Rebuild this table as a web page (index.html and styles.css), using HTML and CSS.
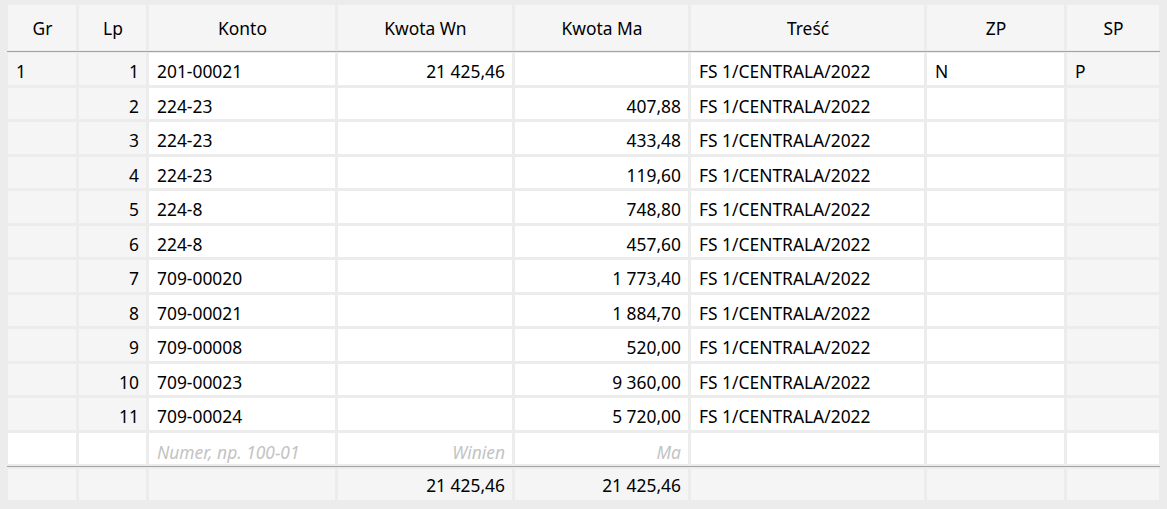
FILE: index.html
```html
<!DOCTYPE html>
<html lang="pl">
<head>
<meta charset="utf-8">
<link rel="stylesheet" href="styles.css">
</head>
<body>
<div class="table">
  <div class="row head">
    <div class="c">Gr</div><div class="c">Lp</div><div class="c">Konto</div><div class="c">Kwota Wn</div><div class="c">Kwota Ma</div><div class="c">Treść</div><div class="c">ZP</div><div class="c">SP</div>
  </div>
  <div class="rule"></div>
  <div class="body">
    <div class="row data"><div class="c ro">1</div><div class="c ro r">1</div><div class="c">201-00021</div><div class="c r">21 425,46</div><div class="c r"></div><div class="c">FS 1/CENTRALA/2022</div><div class="c">N</div><div class="c ro">P</div></div>
    <div class="row data"><div class="c ro"></div><div class="c ro r">2</div><div class="c">224-23</div><div class="c r"></div><div class="c r">407,88</div><div class="c">FS 1/CENTRALA/2022</div><div class="c"></div><div class="c ro"></div></div>
    <div class="row data"><div class="c ro"></div><div class="c ro r">3</div><div class="c">224-23</div><div class="c r"></div><div class="c r">433,48</div><div class="c">FS 1/CENTRALA/2022</div><div class="c"></div><div class="c ro"></div></div>
    <div class="row data"><div class="c ro"></div><div class="c ro r">4</div><div class="c">224-23</div><div class="c r"></div><div class="c r">119,60</div><div class="c">FS 1/CENTRALA/2022</div><div class="c"></div><div class="c ro"></div></div>
    <div class="row data"><div class="c ro"></div><div class="c ro r">5</div><div class="c">224-8</div><div class="c r"></div><div class="c r">748,80</div><div class="c">FS 1/CENTRALA/2022</div><div class="c"></div><div class="c ro"></div></div>
    <div class="row data"><div class="c ro"></div><div class="c ro r">6</div><div class="c">224-8</div><div class="c r"></div><div class="c r">457,60</div><div class="c">FS 1/CENTRALA/2022</div><div class="c"></div><div class="c ro"></div></div>
    <div class="row data"><div class="c ro"></div><div class="c ro r">7</div><div class="c">709-00020</div><div class="c r"></div><div class="c r">1 773,40</div><div class="c">FS 1/CENTRALA/2022</div><div class="c"></div><div class="c ro"></div></div>
    <div class="row data"><div class="c ro"></div><div class="c ro r">8</div><div class="c">709-00021</div><div class="c r"></div><div class="c r">1 884,70</div><div class="c">FS 1/CENTRALA/2022</div><div class="c"></div><div class="c ro"></div></div>
    <div class="row data"><div class="c ro"></div><div class="c ro r">9</div><div class="c">709-00008</div><div class="c r"></div><div class="c r">520,00</div><div class="c">FS 1/CENTRALA/2022</div><div class="c"></div><div class="c ro"></div></div>
    <div class="row data"><div class="c ro"></div><div class="c ro r">10</div><div class="c">709-00023</div><div class="c r"></div><div class="c r">9 360,00</div><div class="c">FS 1/CENTRALA/2022</div><div class="c"></div><div class="c ro"></div></div>
    <div class="row data"><div class="c ro"></div><div class="c ro r">11</div><div class="c">709-00024</div><div class="c r"></div><div class="c r">5 720,00</div><div class="c">FS 1/CENTRALA/2022</div><div class="c"></div><div class="c ro"></div></div>
    <div class="row data new"><div class="c"></div><div class="c r"></div><div class="c ph">Numer, np. 100-01</div><div class="c r ph">Winien</div><div class="c r ph">Ma</div><div class="c"></div><div class="c"></div><div class="c"></div></div>
  </div>
  <div class="rule bottom"></div>
  <div class="row foot">
    <div class="c"></div><div class="c"></div><div class="c"></div><div class="c r">21 425,46</div><div class="c r">21 425,46</div><div class="c"></div><div class="c"></div><div class="c"></div>
  </div>
</div>
</body>
</html>
```
FILE: styles.css
```css
html, body {
  margin: 0;
  background: #ececec;
}
body {
  font-family: "Noto Sans", "Open Sans", sans-serif;
  font-size: 17.4px;
  color: #000;
}
.table {
  padding: 5px 8px 0 8px;
  width: 1151px;
}
.row {
  display: grid;
  grid-template-columns: 68px 67px 186px 174px 173px 233px 137px 92px;
  column-gap: 3px;
}
.c {
  background: #fff;
  display: flex;
  align-items: center;
  padding: 0 7px 0 8px;
  white-space: nowrap;
  overflow: hidden;
  box-sizing: border-box;
}
.c.r { justify-content: flex-end; }
.c.ro { background: #f5f5f5; }
.head .c {
  background: #f5f5f5;
  height: 45px;
  justify-content: center;
  padding-top: 1px;
}
.rule {
  height: 1px;
  background: #a3a3a3;
  margin: 1px -1px 1px -1px;
}
.rule.bottom { margin: 2px -1px 2px -1px; }
.body {
  display: flex;
  flex-direction: column;
  gap: 3px;
}
.data .c {
  height: 31.5px;
  padding-top: 5px;
}
.data.new .c { padding-top: 7px; }
.ph {
  color: #c3c3c3;
  font-style: italic;
}
.foot .c {
  background: #f5f5f5;
  height: 30.5px;
  padding-top: 2px;
}
```
